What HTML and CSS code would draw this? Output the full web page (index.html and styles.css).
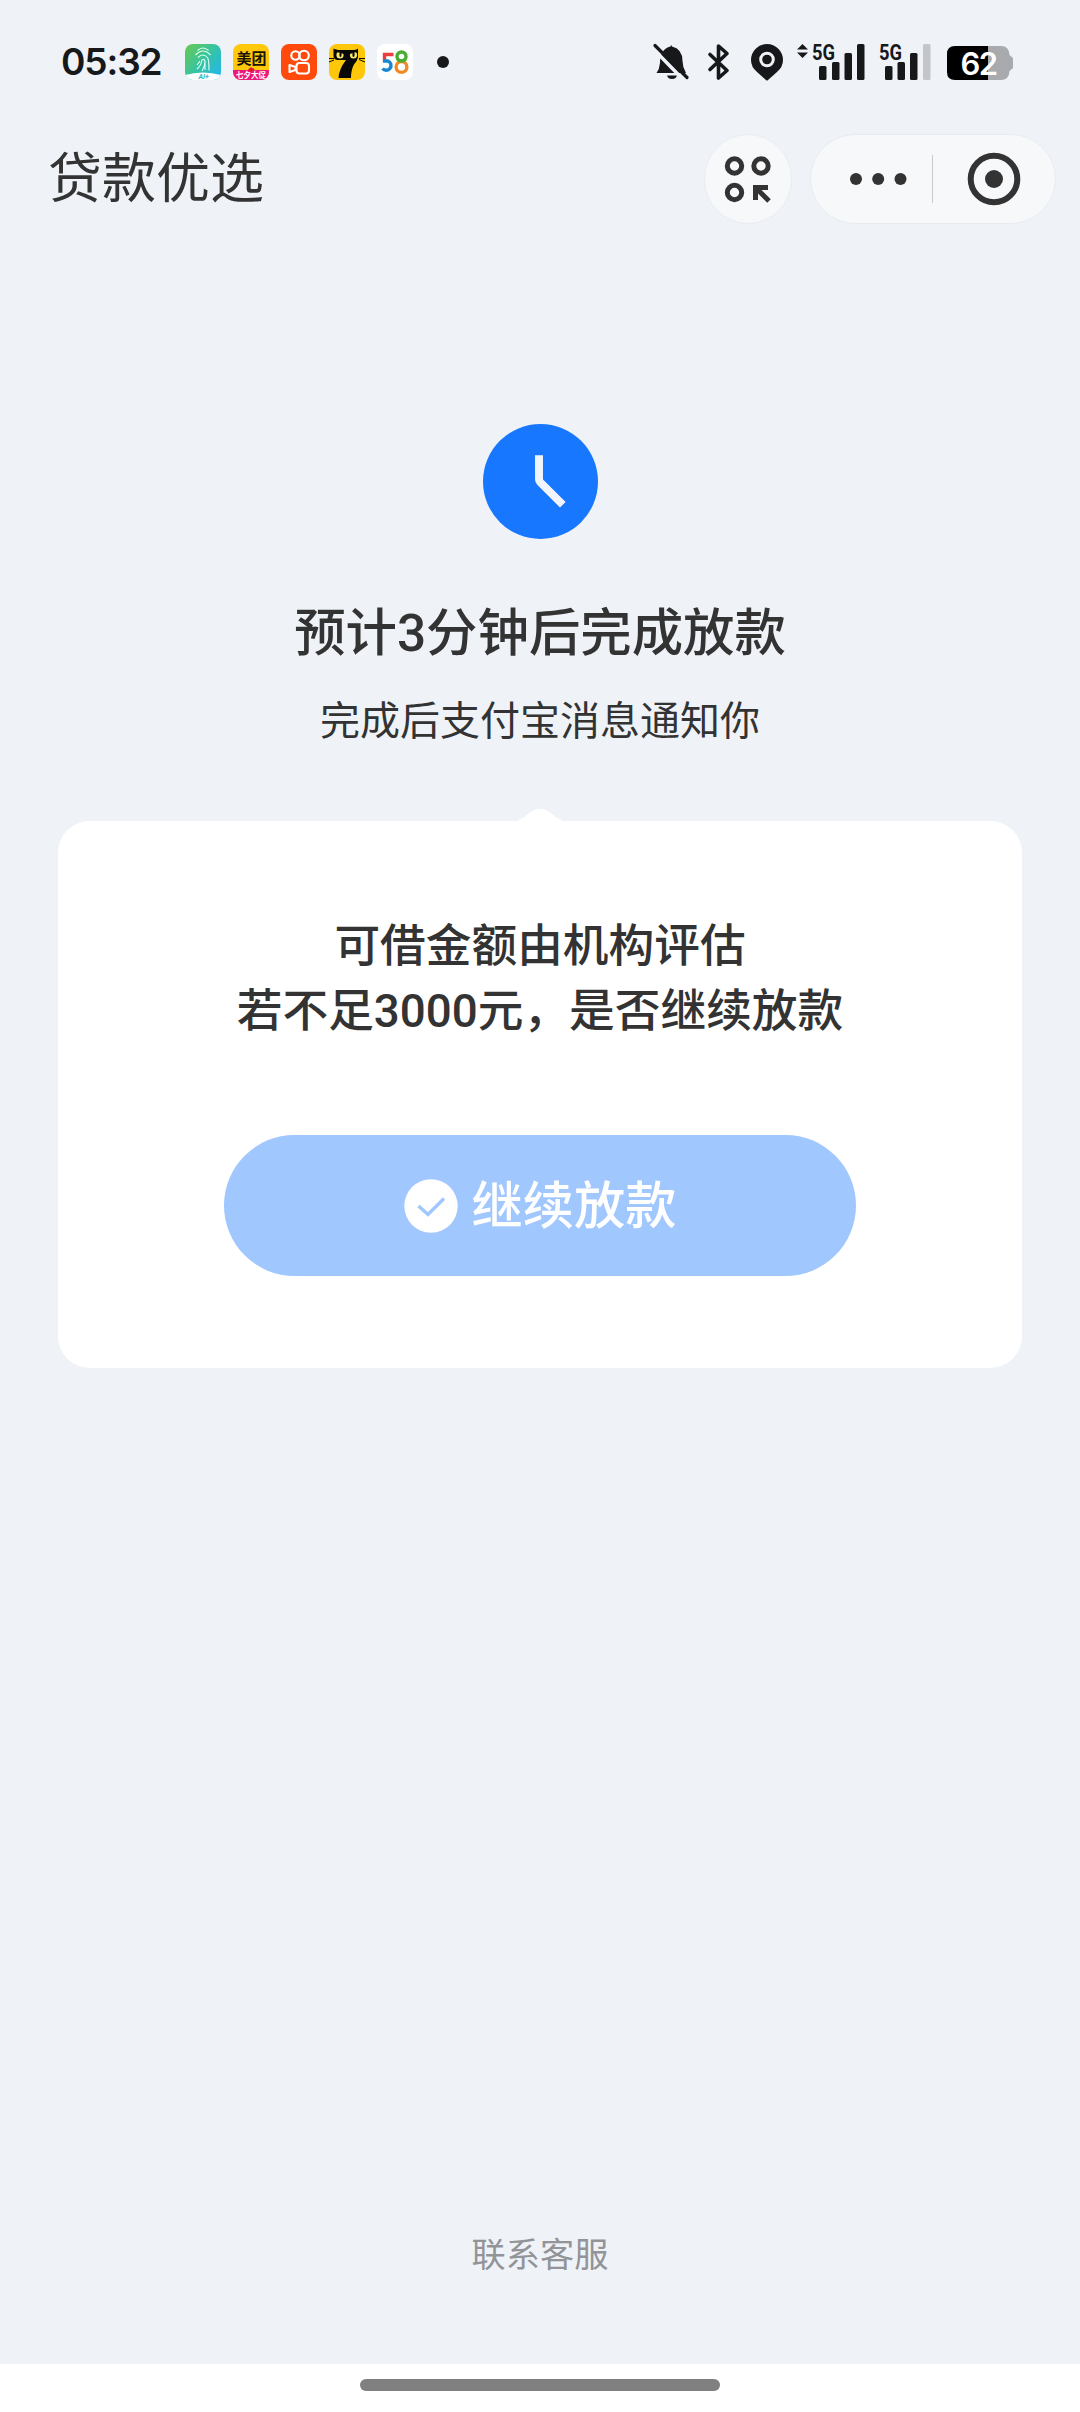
FILE: index.html
```html
<!DOCTYPE html>
<html lang="zh-CN">
<head>
<meta charset="utf-8">
<title>贷款优选</title>
<link rel="stylesheet" href="styles.css">
</head>
<body>
<div class="status">
  <span class="time">05:32</span>
  <div class="apps">
    <svg class="app" viewBox="0 0 36 36">
      <defs>
        <linearGradient id="aqua" x1="0" y1="0" x2="1" y2="0.8"><stop offset="0" stop-color="#6cc84f"/><stop offset=".55" stop-color="#35c4a4"/><stop offset="1" stop-color="#25b6ea"/></linearGradient>
        <clipPath id="tile"><rect width="36" height="36" rx="8"/></clipPath>
      </defs>
      <g clip-path="url(#tile)">
        <rect width="36" height="36" fill="url(#aqua)"/>
        <path d="M0 31Q18 26 36 31V36H0z" fill="#fff"/>
        <path d="M12.500 6.500q5.500-5 11 0M10.500 11q7.500-8 15 0M13 13.500q5-5 9.500 0 1.500 2 1.500 13M12 25q4-3 5-9 2-2 3 1 0 5-3 10M20 17v9M12 21l3-4" fill="none" stroke="#e2fff2" stroke-width="1.100"/>
        <text x="18.500" y="35" text-anchor="middle" font-size="7" font-weight="700" font-style="italic" fill="#38b7c0">AI+</text>
      </g>
    </svg>
    <svg class="app" viewBox="0 0 36 36">
      <g clip-path="url(#tile)">
        <rect width="36" height="36" fill="#ffc80a"/>
        <path d="M0 26h15l3-3 3 3h15v10H0z" fill="#ed187b"/>
        <path d="M15 26l3 2 4-2-2-2h-3z" fill="#d91c25"/>
        <text x="18.500" y="20" text-anchor="middle" font-size="15" font-weight="700" fill="#191506">美团</text>
        <text x="18" y="33.500" text-anchor="middle" font-size="7.500" font-weight="700" fill="#fff">七夕大促</text>
      </g>
    </svg>
    <svg class="app" viewBox="0 0 36 36">
      <rect width="36" height="36" rx="8" fill="#ff4a0c"/>
      <g fill="none" stroke="#fff" stroke-width="2.100" stroke-linejoin="round"><circle cx="14.500" cy="11.500" r="4.200"/><circle cx="23" cy="11.500" r="4.800"/><rect x="15.500" y="19" width="12.500" height="10.500" rx="3"/><path d="M8.500 21v7l6-2v-3z"/></g>
    </svg>
    <svg class="app" viewBox="0 0 36 36">
      <g clip-path="url(#tile)">
        <rect width="36" height="36" fill="#ffc709"/>
        <path d="M4.500 4.500q3 1.500 5 1.500h15q3 0 4.500-1.500v9q-1 4-4 7-3 5-3 13.500H9.500q.5-9 7.500-18H8q-3.500-1-3.500-4z" fill="#080807"/>
        <path d="M0 14.500h5M0 18l5-2M30 14.500h6M30 15.500l6 2.500" stroke="#080807"/>
        <circle cx="11" cy="11" r="3.600" fill="#f5e56a"/><circle cx="24.500" cy="11" r="3.600" fill="#f5e56a"/>
        <path d="M6.500 6.500l9.500 2.800M29 6.500l-9.500 2.800" stroke="#080807" stroke-width="2"/>
        <ellipse cx="11.500" cy="10.500" rx="1.100" ry="2.600" fill="#080807"/><ellipse cx="24.500" cy="10.500" rx="1.100" ry="2.600" fill="#080807"/>
      </g>
    </svg>
    <svg class="app" viewBox="0 0 36 36">
      <rect width="36" height="36" rx="8" fill="#fff"/>
      <g fill="none" stroke-width="3.400"><path d="M16.500 10.500H7.500v7" stroke="#e83d3e"/><path d="M6 17h5a4.800 4.800 0 1 1-5.500 7.500" stroke="#1687d0"/><circle cx="24.500" cy="12.500" r="4.500" stroke="#48ae32"/><circle cx="24.500" cy="23" r="5.400" stroke="#f28a23"/><path d="M20.500 15.500q4 3 8 0" stroke="#48ae32"/></g>
    </svg>
    <i class="more-dot"></i>
  </div>
  <div class="signals">
    <svg class="bell" viewBox="0 0 36 36">
      <path d="M3.500 29q3-4 3.500-10 0-14 10.500-16.500Q18 0 19 2.500 29.500 5 29.500 17q0 6 3.500 12z" fill="#17181a"/>
      <path d="M14 31.500h10q-1 3.500-5 3.500t-5-3.500z" fill="#17181a"/>
      <path d="M-1 3.500l33 34" stroke="#eff3f8" stroke-width="3.500"/><path d="M2 1.500l32 32" stroke="#17181a" stroke-width="3.200" stroke-linecap="round"/>
    </svg>
    <svg class="bt" viewBox="0 0 22 36"><path d="M2 10.500l17 16-8.500 7.500V2l8.500 7.500-17 16" fill="none" stroke="#17181a" stroke-width="3.600" stroke-linejoin="round" stroke-linecap="round"/></svg>
    <svg class="pin" viewBox="0 0 32 37"><path d="M16 0a16 16 0 0 1 16 16q0 7-6 12l-9 8q-1 1-2 0l-9-8Q0 23 0 16A16 16 0 0 1 16 0z" fill="#17181a"/><circle cx="16" cy="15.500" r="6.300" fill="#17181a" stroke="#eff3f8" stroke-width="3"/></svg>
    <svg class="cell" viewBox="0 0 68 38">
      <path d="M0 6.500L5.500 1 11 6.500zM0 9.500h11L5.500 15z" fill="#17181a"/>
      <text class="net" x="15" y="16.500" textLength="23" lengthAdjust="spacingAndGlyphs">5G</text>
      <g fill="#17181a"><rect x="22" y="23" width="7.500" height="14" rx="1.500"/><rect x="35" y="19" width="7.500" height="18" rx="1.500"/><rect x="47.500" y="10" width="7.500" height="27" rx="1.500"/><rect x="60" y="1" width="7.500" height="36" rx="1.500"/></g>
    </svg>
    <svg class="cell2" viewBox="0 0 52 38">
      <text class="net" x="0" y="16.500" textLength="23" lengthAdjust="spacingAndGlyphs">5G</text>
      <g fill="#17181a"><rect x="6" y="23" width="7.500" height="14" rx="1.500"/><rect x="18.500" y="19" width="7.500" height="18" rx="1.500"/><rect x="31" y="10" width="7.500" height="27" rx="1.500"/><rect x="44" y="1" width="7.500" height="36" rx="1.500" fill="#c3c5ca"/></g>
    </svg>
    <svg class="battery" viewBox="0 0 67 34">
      <path d="M41 0h13q8 0 8.500 9l3.500 3v10l-3.500 3q-.5 9-8.500 9H41z" fill="#a9aaad"/>
      <path d="M8 0h33v34H8q-8 0-8-8V8q0-8 8-8z" fill="#000"/>
      <text class="level" x="31.500" y="28.500" text-anchor="middle">62</text>
    </svg>
  </div>
</div>

<header class="nav">
  <h1 class="nav-title">贷款优选</h1>
  <div class="round-btn">
    <svg width="48" height="48" viewBox="0 0 48 48"><g fill="none" stroke="#333" stroke-width="5"><circle cx="10.500" cy="11" r="7.200"/><circle cx="37" cy="11" r="7.200"/><circle cx="10.500" cy="37.500" r="7.200"/><path d="M31.500 45V32.500H44M32 33l13 13"/></g></svg>
  </div>
  <div class="capsule">
    <svg class="dots" viewBox="0 0 58 14"><g fill="#333"><circle cx="7" cy="7" r="6"/><circle cx="29.200" cy="7" r="6"/><circle cx="51.500" cy="7" r="6"/></g></svg>
    <i class="divider"></i>
    <svg class="target" viewBox="0 0 54 54"><circle cx="27" cy="27" r="23.300" fill="none" stroke="#333" stroke-width="6"/><circle cx="27" cy="27" r="9" fill="#333"/></svg>
  </div>
</header>

<main class="main">
  <svg class="clock" viewBox="0 0 116 116"><circle cx="58" cy="58" r="58" fill="#1777ff"/><path d="M56.500 31.500V56q0 1.500 1 2.500l23 23" fill="none" stroke="#f1f5fb" stroke-width="8"/></svg>
  <h2 class="headline">预计3分钟后完成放款</h2>
  <p class="sub">完成后支付宝消息通知你</p>
  <svg class="notch" viewBox="0 0 54 13"><path d="M0 13Q8 11.500 15 5q6-5 12-5t12 5q7 6.500 15 8z" fill="#fff"/></svg>
  <section class="card">
    <p class="ask">可借金额由机构评估<br>若不足3000元，是否继续放款</p>
    <button class="go"><svg class="check" viewBox="0 0 54 54"><circle cx="27" cy="27" r="26.700" fill="#fff"/><path d="M14.500 27l9.500 8.500 16-16" fill="none" stroke="#a1c7ff" stroke-width="3.400"/></svg><span class="go-label">继续放款</span></button>
  </section>
  <a class="service">联系客服</a>
</main>
<footer class="gesture"><i class="handle"></i></footer>
</body>
</html>
```
FILE: styles.css
```css
* { box-sizing: border-box; margin: 0; padding: 0; }
body {
  width: 1080px; height: 2412px; overflow: hidden;
  display: flex; flex-direction: column;
  background: #eff3f8; color: #333;
  font-family: Roboto, "Noto Sans CJK SC", sans-serif;
}
svg { display: block; flex: none; overflow: visible; }
.status { height: 124px; padding: 0 66px 0 61px; display: flex; align-items: center; }
.time { width: 124px; font: 600 37px/44px Inter, sans-serif; letter-spacing: -1.1px; color: #17181a; white-space: nowrap; }
.apps { display: flex; align-items: center; gap: 12px; }
.app { width: 36px; height: 36px; }
.more-dot { width: 12px; height: 12px; margin-left: 12px; border-radius: 50%; background: #17181a; }
.signals { margin-left: auto; display: flex; align-items: center; }
.bell { width: 36px; height: 36px; margin-right: 19px; }
.bt { width: 22px; height: 36px; margin-right: 21px; }
.pin { width: 32px; height: 37px; margin-right: 14px; }
.cell { width: 68px; height: 38px; margin-right: 14px; }
.cell2 { width: 52px; height: 38px; margin-right: 16px; }
.battery { width: 67px; height: 34px; margin-top: 2px; }
.net { font-size: 22px; font-weight: 700; fill: #17181a; }
.level { font: 600 31px Inter, sans-serif; letter-spacing: -1.5px; fill: #fff; }

.nav { height: 109px; padding: 0 24px 0 48px; display: flex; align-items: center; margin-bottom: 191px; }
.nav-title { flex: 1; padding-top: 3px; font-size: 54px; line-height: 80px; font-weight: 400; }
.round-btn, .capsule { height: 90px; background: #f7f8fa; border: 1px solid #e8ebf0; display: flex; align-items: center; }
.round-btn { width: 88px; border-radius: 45px; justify-content: center; margin-right: 18px; }
.capsule { width: 246px; border-radius: 45px; padding-left: 38px; }
.dots { width: 58px; height: 14px; }
.divider { width: 1px; height: 48px; margin: 0 34px 0 25px; background: #c7c9cb; }
.target { width: 54px; height: 54px; }

.main { flex: 1; display: flex; flex-direction: column; align-items: center; }
.clock { width: 115px; height: 115px; }
.headline { margin-top: 57px; font-size: 51.4px; line-height: 76px; font-weight: 500; white-space: nowrap; }
.sub { margin-top: 20px; font-size: 40px; line-height: 60px; }
.notch { width: 56px; height: 13px; margin-top: 57px; }
.card { width: 964px; height: 547px; margin-top: -1px; padding-top: 93px; border-radius: 32px; background: #fff; display: flex; flex-direction: column; align-items: center; }
.ask { font-size: 45.7px; line-height: 65px; font-weight: 500; text-align: center; white-space: nowrap; }
.go { width: 632px; height: 141px; margin-top: 91px; border: 0; border-radius: 71px; background: #a1c7ff; color: #fff; font: 500 51.2px/76px Roboto, "Noto Sans CJK SC", sans-serif; display: flex; align-items: center; justify-content: center; gap: 14px; }
.go-label { padding-top: 3px; }
.check { width: 54px; height: 54px; }
.service { margin-top: auto; margin-bottom: 83px; font-size: 34.2px; line-height: 52px; color: #929498; }
.gesture { height: 48px; background: #fff; padding-top: 15px; display: flex; justify-content: center; }
.handle { width: 360px; height: 12px; border-radius: 6px; background: #808080; }
```
